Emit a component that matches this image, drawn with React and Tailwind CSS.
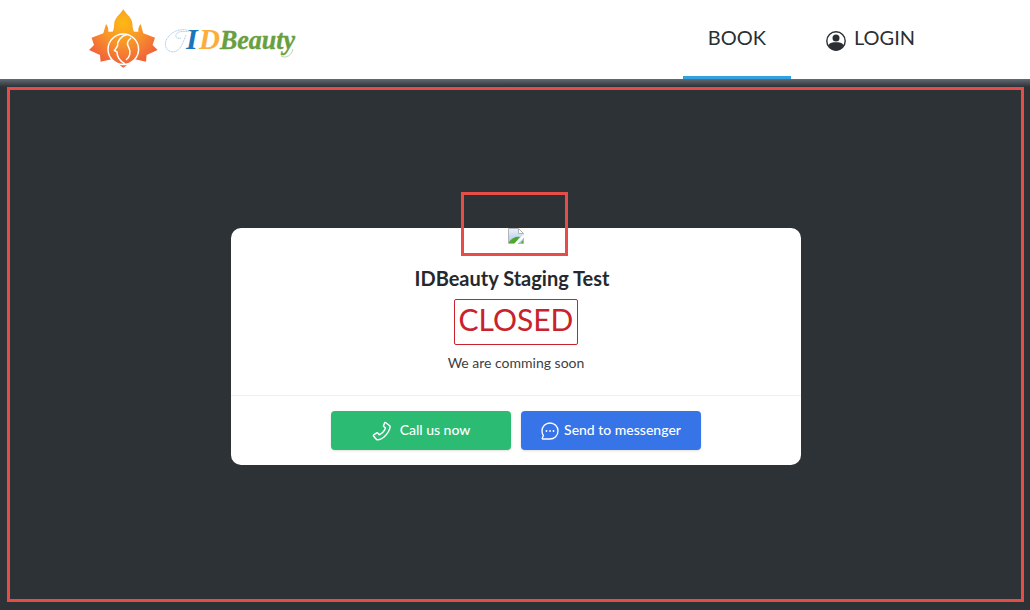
import React from "react";

const LATO = { fontFamily: "Lato, 'Open Sans', sans-serif" };

// Maple leaf logo with the round face mark
function Logo() {
  return (
    <svg width="208" height="62" viewBox="0 0 208 62" className="block">
      <defs>
        <radialGradient id="leaf" gradientUnits="userSpaceOnUse" cx="34" cy="16" r="42">
          <stop offset="0" stopColor="#fdb913" />
          <stop offset="0.5" stopColor="#f8942a" />
          <stop offset="1" stopColor="#f1633a" />
        </radialGradient>
      </defs>
      <path
        d="M34.300 2.300 C38 8 43.500 11 43.500 18 C43.500 20 44 23 45 24.700 L49.300 24.700 C49 21 50 19 51.600 17 L54.300 26.300 L66 30.700 L63.600 38 L68.600 43 L57.600 48 L57 54.700 L46 52.300 L34.300 60.700 L22.600 52.300 L11.600 54.700 L11 48 L0 43 L5 38 L2.600 30.700 L14.300 26.300 L17 17 C18.600 19 19.600 21 19.300 24.700 L23.600 24.700 C24.600 23 25.100 20 25.100 18 C25.100 11 30.600 8 34.300 2.300 Z"
        fill="url(#leaf)"
      />
      <g fill="none" stroke="#fff" strokeWidth="1.500">
        <circle cx="34.300" cy="42.300" r="15.300" />
        <path d="M38 27.500 C32 29 28 34 28.500 39 L25.500 43.500 L28 45 C28 50 31 54 36 57" />
        <path d="M42 31 C38 34 38 38 40 41 C42 45 41 50 37 53" />
      </g>
      <g fill="none" stroke="#8db8dd" strokeWidth="0.700" strokeDasharray="1.200 0.500">
        <path d="M100 24 C92 20 80 25 76.500 35 C75 44 84 48 90 42 C93 39 95 33 97 28" />
        <path d="M92 31 C86 33 85 27 90 25 C93 24 97 25 100 24" />
      </g>
      <text x="97" y="42" fontFamily="'Liberation Serif', serif" fontStyle="italic" fontWeight="700" fontSize="30" fill="#1b75bb">I</text>
      <text x="110" y="42" fontFamily="'Liberation Serif', serif" fontStyle="italic" fontWeight="700" fontSize="30" fill="#fbae3c" textLength="21" lengthAdjust="spacingAndGlyphs">D</text>
      <text x="131" y="42" fontFamily="'Liberation Serif', serif" fontStyle="italic" fontWeight="700" fontSize="27" fill="#689f3f" stroke="#689f3f" strokeWidth="0.400" textLength="75" lengthAdjust="spacingAndGlyphs">Beauty</text>
      <path d="M192 49 C197 52 203 48 204 42" fill="none" stroke="#9cc47e" strokeWidth="0.700" />
    </svg>
  );
}

function UserCircle() {
  return (
    <svg width="20" height="20" viewBox="0 0 20 20" className="block">
      <circle cx="10" cy="10" r="9.200" fill="none" stroke="#2b2f33" strokeWidth="1.400" />
      <circle cx="10" cy="7" r="3.500" fill="#2b2f33" />
      <path d="M2.500 14 C4 11.800 6.500 11.300 10 11.300 C13.500 11.300 16 11.800 17.500 14 C16 18 13 19.500 10 19.500 C7 19.500 4 18 2.500 14 Z" fill="#2b2f33" />
    </svg>
  );
}

function PhoneIcon() {
  return (
    <svg width="20" height="20" viewBox="0 0 20 20" fill="none" stroke="#fff" strokeWidth="1.500" strokeLinejoin="round" className="block">
      <path d="M13.500 1.500 L18 5 C18.500 8 15.500 13 12 16 C9 18.500 6 19 4.500 18.500 L1.500 15 C1.300 14.500 1.500 14 2 13.700 L4.700 12 C5.200 11.700 5.700 11.800 6 12.200 L7.200 13.700 C9.500 12.800 12.500 9.500 13.500 7 L11.800 5.500 C11.400 5.200 11.400 4.700 11.700 4.300 L12.700 1.800 C12.900 1.400 13.200 1.300 13.500 1.500 Z" />
    </svg>
  );
}

function ChatIcon() {
  return (
    <svg width="18" height="18" viewBox="0 0 18 18" fill="none" className="block">
      <path d="M9 1 C13.500 1 17 4.500 17 9 C17 13.500 13.500 17 9 17 L1.800 17 C1.200 17 1 16.500 1.300 16 L2.400 13.600 C1.500 12.300 1 10.700 1 9 C1 4.500 4.500 1 9 1 Z" stroke="#fff" strokeWidth="1.300" />
      <circle cx="5.500" cy="9" r="0.900" fill="#fff" />
      <circle cx="9" cy="9" r="0.900" fill="#fff" />
      <circle cx="12.500" cy="9" r="0.900" fill="#fff" />
    </svg>
  );
}

// Chrome's broken image glyph
function BrokenImage() {
  return (
    <svg width="16" height="16" viewBox="0 0 16 16" className="block">
      <defs>
        <linearGradient id="sky" x1="0" y1="0" x2="0" y2="1">
          <stop offset="0" stopColor="#eef3fb" />
          <stop offset="1" stopColor="#a9c4ec" />
        </linearGradient>
      </defs>
      <path d="M0.500 0.500 H10.500 L15.500 5.500 V15.500 H0.500 Z" fill="url(#sky)" stroke="#b4b4b4" />
      <path d="M10.500 0.500 V5.500 H15.500 Z" fill="#fff" stroke="#b4b4b4" />
      <path d="M1 15 L1 14 C4 10 8 8 12 9 L7 15 Z" fill="#4fa82e" />
      <path d="M13 15 L15 12 V15 Z" fill="#4fa82e" />
      <path d="M6 16 L16 6 V9.500 L9.500 16 Z" fill="#fff" />
    </svg>
  );
}

export default function App() {
  return (
    <div className="flex h-screen flex-col overflow-hidden bg-[#2d3236]" style={LATO}>
      <header className="flex h-[79px] shrink-0 items-start justify-between bg-white pl-[89px] pr-[115px]">
        <div className="pt-[7px]">
          <Logo />
        </div>
        <nav className="flex h-[79px] items-start text-[20px] text-[#2b2f33]">
          <a className="flex h-[79px] w-[108px] justify-center border-b-[3px] border-[#35a0e0] pt-[23px] leading-[28px]">BOOK</a>
          <a className="ml-[35px] flex items-start gap-[8px] pt-[23px] leading-[28px]">
            <span className="pt-[8px]">
              <UserCircle />
            </span>
            LOGIN
          </a>
        </nav>
      </header>

      <main className="relative flex flex-1 flex-col items-center bg-[#2d3236] bg-gradient-to-b from-[#626a73] to-[#2d3236] to-[8px] pl-[2px] pt-[149px]">
        {/* marker outline over the page */}
        <div className="absolute bottom-[8px] left-[7px] right-[6px] top-[8px] border-[3px] border-[#e64c48]" />

        <div className="relative w-[570px] rounded-[10px] bg-white text-center text-[#2b2f33]">
          <div className="absolute left-[230px] top-[-36px] h-[64px] w-[107px] border-[3px] border-[#e64c48]" />
          <div className="flex justify-center">
            <BrokenImage />
          </div>
          <h2 className="mt-[21px] pr-[8px] text-[20px] font-bold leading-[26px] text-[#25292d]">IDBeauty Staging Test</h2>
          <div className="mt-[8px] flex justify-center">
            <span className="h-[46px] rounded-[2px] border border-[#c8232c] px-[4px] text-[30px] leading-[38px] text-[#c8232c]">CLOSED</span>
          </div>
          <p className="mt-[7px] text-[14px] leading-[21px] text-[#3c4146]">We are comming soon</p>
          <div className="mt-[22px] flex justify-center gap-[10px] border-t border-[#eceeef] pb-[15px] pt-[15px]">
            <button className="flex h-[39px] w-[180px] items-center justify-center gap-[8px] rounded-[4px] bg-[#2bbb73] text-[14px] font-medium text-white shadow-sm">
              <PhoneIcon />
              <span className="pb-[2px]">Call us now</span>
            </button>
            <button className="flex h-[39px] w-[180px] items-center justify-center gap-[5px] rounded-[4px] bg-[#3674e8] text-[14px] font-medium text-white shadow-sm">
              <ChatIcon />
              <span className="pb-[2px]">Send to messenger</span>
            </button>
          </div>
        </div>
      </main>
    </div>
  );
}
